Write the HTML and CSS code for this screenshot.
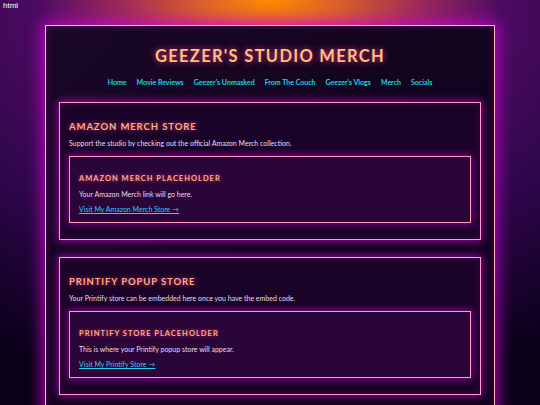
FILE: index.html
```html
<!DOCTYPE html>
<html>
<head>
<meta charset="utf-8">
<link rel="stylesheet" href="styles.css">
</head>
<body>
<div class="tag">html</div>
<div class="page">
  <header class="header">
    <h1 class="title">GEEZER'S STUDIO MERCH</h1>
    <nav class="nav">
      <a href="#">Home</a>
      <a href="#">Movie Reviews</a>
      <a href="#">Geezer's Unmasked</a>
      <a href="#">From The Couch</a>
      <a href="#">Geezer's Vlogs</a>
      <a href="#">Merch</a>
      <a href="#">Socials</a>
    </nav>
  </header>
  <section class="card">
    <h2 class="card-title">AMAZON MERCH STORE</h2>
    <p class="text">Support the studio by checking out the official Amazon Merch collection.</p>
    <div class="inner">
      <h3 class="inner-title">AMAZON MERCH PLACEHOLDER</h3>
      <p class="text">Your Amazon Merch link will go here.</p>
      <p class="link-row"><a class="link" href="#">Visit My Amazon Merch Store →</a></p>
    </div>
  </section>
  <section class="card">
    <h2 class="card-title">PRINTIFY POPUP STORE</h2>
    <p class="text">Your Printify store can be embedded here once you have the embed code.</p>
    <div class="inner">
      <h3 class="inner-title">PRINTIFY STORE PLACEHOLDER</h3>
      <p class="text">This is where your Printify popup store will appear.</p>
      <p class="link-row"><a class="link" href="#">Visit My Printify Store →</a></p>
    </div>
  </section>
</div>
</body>
</html>
```
FILE: styles.css
```css
* { box-sizing: border-box; }
html, body { margin: 0; padding: 0; }
body {
  font-family: "Lato", "DejaVu Sans", sans-serif;
  min-height: 405px;
  overflow: hidden;
  background:
    radial-gradient(ellipse 230px 90px at 50% 0, rgba(255,140,0,1) 0%, rgba(240,110,30,0.85) 30%, rgba(200,60,80,0.6) 65%, rgba(120,20,100,0) 100%),
    radial-gradient(ellipse 520px 400px at 50% 0, #6a1470 0%, #520c66 40%, #2a0646 70%, #0a0018 100%);
  background-color: #0a0018;
}
.tag {
  height: 25px;
  padding: 1px 0 0 3px;
  font-family: "Liberation Sans", sans-serif;
  font-size: 8px;
  color: #ffffff;
  line-height: 10px;
}
.page {
  width: 450px;
  margin: 0 auto;
  border: 1.5px solid #ffb4c4;
  background: linear-gradient(135deg, #190826 0%, #12041e 50%, #10021c 100%);
  box-shadow: 0 0 14px 3px rgba(220, 0, 220, 0.75), inset 0 0 10px rgba(200,0,200,0.25);
  padding: 0 13px 20px;
}
.header { text-align: center; padding-top: 20px; }
.title {
  margin: 0;
  font-size: 16.5px;
  line-height: 20px;
  letter-spacing: 1.3px;
  font-weight: 700;
  color: #ffbf80;
  text-shadow: 0 0 6px rgba(255, 60, 140, 0.9);
}
.nav {
  display: flex;
  justify-content: center;
  gap: 10px;
  margin-top: 12px;
  font-size: 7px;
  line-height: 9px;
}
.nav a {
  color: #19d3e6;
  text-decoration: none;
  font-weight: 700;
}
.card {
  margin-top: 15px;
  border: 1.5px solid #ff9cc4;
  background: #1a0328;
  box-shadow: 0 0 8px 1px rgba(230, 0, 230, 0.7), inset 0 0 8px rgba(200,0,200,0.2);
  padding: 18px 9px 16px;
}
.card + .card { margin-top: 17px; }
.card-title {
  margin: 0;
  font-size: 9.5px;
  line-height: 12px;
  letter-spacing: 0.9px;
  color: #ffb07c;
  text-shadow: 0 0 5px rgba(255, 60, 140, 0.8);
}
.text {
  margin: 5px 0 0;
  font-size: 7px;
  line-height: 10px;
  color: #e8def0;
}
.inner {
  margin-top: 8px;
  border: 1.5px solid #ff9cc4;
  background: #2a0538;
  box-shadow: 0 0 7px 1px rgba(230, 0, 230, 0.6);
  padding: 17px 9px 8px;
}
.inner-title {
  margin: 0 0 5px;
  font-size: 7.5px;
  line-height: 10px;
  letter-spacing: 1px;
  color: #ffb07c;
  text-shadow: 0 0 4px rgba(255, 60, 140, 0.8);
}
.inner .text { margin: 0; }
.link-row {
  margin: 5px 0 0;
  font-size: 7px;
  line-height: 10px;
}
.link {
  color: #2ad0ee;
  text-decoration: underline;
}
```
